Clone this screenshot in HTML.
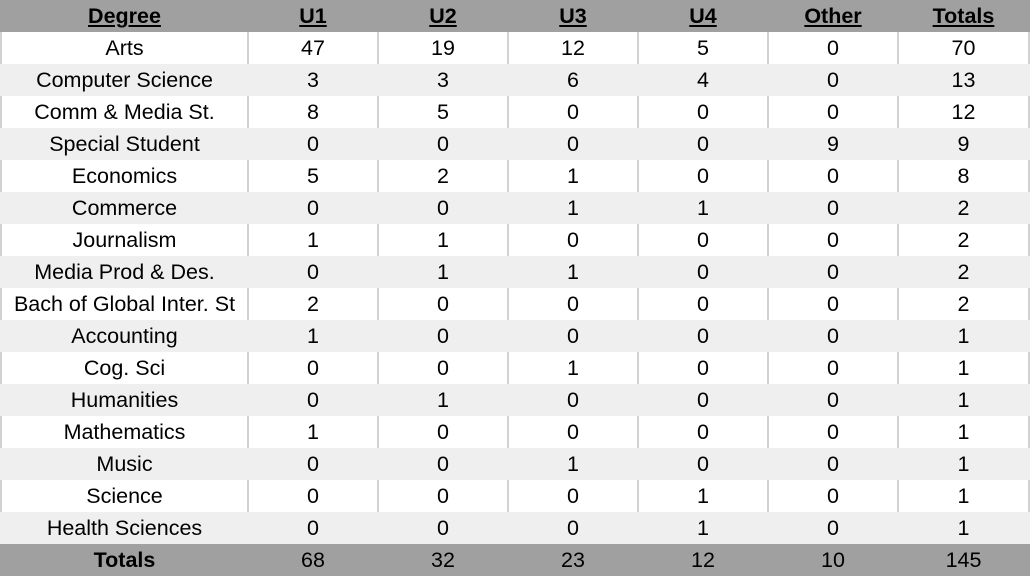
<!DOCTYPE html>
<html><head><style>
body{margin:0;width:1030px;height:578px;background:#fff;overflow:hidden;font-family:"Liberation Sans",sans-serif;}
table{border-collapse:collapse;table-layout:fixed;width:1028px;position:absolute;left:0;top:0;}
td{height:32px;padding:0;text-align:center;font-size:21.5px;color:#000;border-left:2px solid #d2d2d2;border-right:2px solid #d2d2d2;white-space:nowrap;overflow:hidden;line-height:32px;}
tr.h td{background:#a0a0a0;font-weight:bold;text-decoration:underline;height:32px;line-height:32px;border-color:#a0a0a0;}
tr.g td{background:#efefef;border-color:#efefef;}
tr.t td{background:#a0a0a0;border-color:#a0a0a0;height:32px;line-height:32px;}
tr.t td:first-child{font-weight:bold;}
</style></head><body>
<table>
<colgroup><col style="width:247px"><col style="width:130px"><col style="width:130px"><col style="width:130px"><col style="width:130px"><col style="width:130px"><col style="width:131px"></colgroup>
<tr class="h"><td>Degree</td><td>U1</td><td>U2</td><td>U3</td><td>U4</td><td>Other</td><td>Totals</td></tr>
<tr><td>Arts</td><td>47</td><td>19</td><td>12</td><td>5</td><td>0</td><td>70</td></tr>
<tr class="g"><td>Computer Science</td><td>3</td><td>3</td><td>6</td><td>4</td><td>0</td><td>13</td></tr>
<tr><td>Comm &amp; Media St.</td><td>8</td><td>5</td><td>0</td><td>0</td><td>0</td><td>12</td></tr>
<tr class="g"><td>Special Student</td><td>0</td><td>0</td><td>0</td><td>0</td><td>9</td><td>9</td></tr>
<tr><td>Economics</td><td>5</td><td>2</td><td>1</td><td>0</td><td>0</td><td>8</td></tr>
<tr class="g"><td>Commerce</td><td>0</td><td>0</td><td>1</td><td>1</td><td>0</td><td>2</td></tr>
<tr><td>Journalism</td><td>1</td><td>1</td><td>0</td><td>0</td><td>0</td><td>2</td></tr>
<tr class="g"><td>Media Prod &amp; Des.</td><td>0</td><td>1</td><td>1</td><td>0</td><td>0</td><td>2</td></tr>
<tr><td>Bach of Global Inter. St</td><td>2</td><td>0</td><td>0</td><td>0</td><td>0</td><td>2</td></tr>
<tr class="g"><td>Accounting</td><td>1</td><td>0</td><td>0</td><td>0</td><td>0</td><td>1</td></tr>
<tr><td>Cog. Sci</td><td>0</td><td>0</td><td>1</td><td>0</td><td>0</td><td>1</td></tr>
<tr class="g"><td>Humanities</td><td>0</td><td>1</td><td>0</td><td>0</td><td>0</td><td>1</td></tr>
<tr><td>Mathematics</td><td>1</td><td>0</td><td>0</td><td>0</td><td>0</td><td>1</td></tr>
<tr class="g"><td>Music</td><td>0</td><td>0</td><td>1</td><td>0</td><td>0</td><td>1</td></tr>
<tr><td>Science</td><td>0</td><td>0</td><td>0</td><td>1</td><td>0</td><td>1</td></tr>
<tr class="g"><td>Health Sciences</td><td>0</td><td>0</td><td>0</td><td>1</td><td>0</td><td>1</td></tr>
<tr class="t"><td>Totals</td><td>68</td><td>32</td><td>23</td><td>12</td><td>10</td><td>145</td></tr>
</table>
</body></html>
